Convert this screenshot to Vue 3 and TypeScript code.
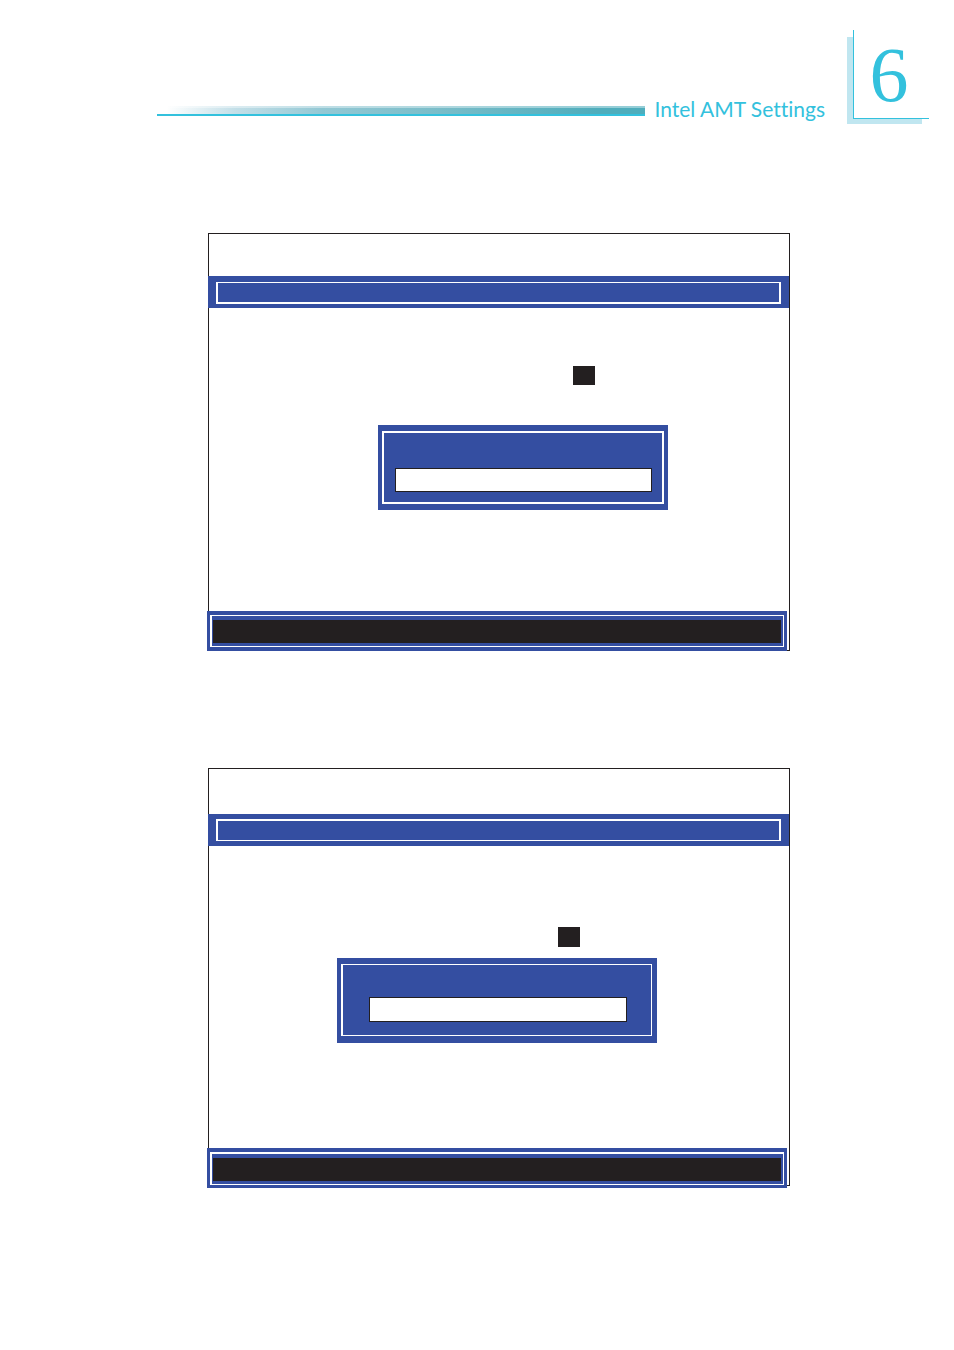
<script setup lang="ts">
import { ref } from 'vue'

interface Screen {
  id: string
  label: string
  value: string
}

const chapter = '6'
const title = 'Intel AMT Settings'
const screens = ref<Screen[]>([
  { id: 'first', label: 'First setting value', value: '' },
  { id: 'second', label: 'Second setting value', value: '' },
])
</script>

<template>
  <div class="page">
    <header class="header">
      <div class="rule"></div>
      <h1 class="title">{{ title }}</h1>
      <div class="badge"><span class="number">{{ chapter }}</span></div>
    </header>
    <main class="screens">
      <section v-for="screen in screens" :key="screen.id" class="screen" :class="screen.id">
        <div class="bar"><div class="bar-frame"></div></div>
        <div class="cursor"></div>
        <div class="dialog">
          <div class="dialog-frame">
            <input v-model="screen.value" class="field" type="text" :aria-label="screen.label" />
          </div>
        </div>
        <div class="footer">
          <div class="footer-frame"><div class="keys"></div></div>
        </div>
      </section>
    </main>
  </div>
</template>

<style>
body {
  margin: 0;
  background: #fff;
}
</style>

<style scoped>
.page,
.page * {
  box-sizing: border-box;
}

.page {
  --blue: #344ea1;
  --ink: #231f20;
  --cyan: #33c1dd;
  padding: 30px 25px 162px 157px;
}

.header {
  display: flex;
  align-items: flex-start;
}

.rule {
  flex: 1;
  height: 10px;
  margin-top: 76px;
  border-bottom: 2px solid var(--cyan);
  background:
    linear-gradient(rgba(255, 255, 255, 0.4), rgba(255, 255, 255, 0.4)) top / 100% 2px no-repeat,
    linear-gradient(90deg, #fff 0%, #fff 2%, #c3dfe8 16%, #93c8d4 34%, #7abdc9 58%, #4fadbc 90%, #4fadbc 100%);
}

.title {
  margin: 65px 28px 0 9px;
  color: var(--cyan);
  font: 400 21px/28px Lato, sans-serif;
  font-variant-ligatures: none;
  white-space: nowrap;
}

.badge {
  position: relative;
  width: 76px;
  height: 89px;
  border-left: 1px solid var(--cyan);
  border-bottom: 1px solid var(--cyan);
  text-align: center;
}

.badge::before {
  content: '';
  position: absolute;
  top: 7px;
  right: 7px;
  bottom: -6px;
  left: -7px;
  border: solid #c0e6f0;
  border-width: 0 0 5px 6px;
}

.number {
  display: block;
  margin-right: 5px;
  color: var(--cyan);
  font: 400 78px/90px "Liberation Serif", serif;
}

.screens {
  display: flex;
  flex-direction: column;
  gap: 117px;
  margin: 110px 139px 0 51px;
}

.screen {
  border: 1px solid var(--ink);
}

.bar {
  height: 32px;
  margin: 42px 0 0 -1px;
  padding: 6px 8px 4px;
  background: var(--blue);
}

.bar-frame {
  height: 100%;
  border: 2px solid #fff;
  border-top-width: 1px;
}

.cursor {
  width: 22px;
  height: 19px;
  margin: 58px 0 0 364px;
  background: var(--ink);
}

.dialog {
  width: 290px;
  margin: 40px 0 101px 169px;
  padding: 6px 4px;
  background: var(--blue);
}

.dialog-frame {
  display: flex;
  padding: 35px 10px 10px 11px;
  border: 2px solid #fff;
}

.field {
  flex: 1;
  min-width: 0;
  height: 24px;
  padding: 0 6px;
  border: 1px solid var(--ink);
  border-radius: 0;
  outline: none;
  background: #fff;
  color: var(--ink);
  font: 14px/20px "Liberation Sans", sans-serif;
}

.footer {
  position: relative;
  height: 40px;
  margin: 0 2px -1px -2px;
  padding: 4px 3px;
  background: var(--blue);
}

.footer-frame {
  height: 100%;
  padding: 4px 2px 3px 1px;
  border: 1px solid #fff;
  border-left-width: 2px;
}

.keys {
  height: 23px;
  background: var(--ink);
}

.second .bar {
  margin-top: 45px;
  padding: 5px 8px;
}

.second .bar-frame {
  border-width: 2px 2px 1px;
}

.second .cursor {
  height: 20px;
  margin: 81px 0 0 349px;
}

.second .dialog {
  width: 320px;
  margin: 11px 0 105px 128px;
  padding: 6px 5px 7px 4px;
}

.second .dialog-frame {
  padding: 32px 24px 13px 26px;
  border-width: 1px 1px 1px 2px;
}

.second .field {
  height: 25px;
}

.second .footer {
  margin-bottom: -3px;
  padding: 4px 3px 3px;
}

.second .footer-frame {
  border-top-width: 2px;
}
</style>
